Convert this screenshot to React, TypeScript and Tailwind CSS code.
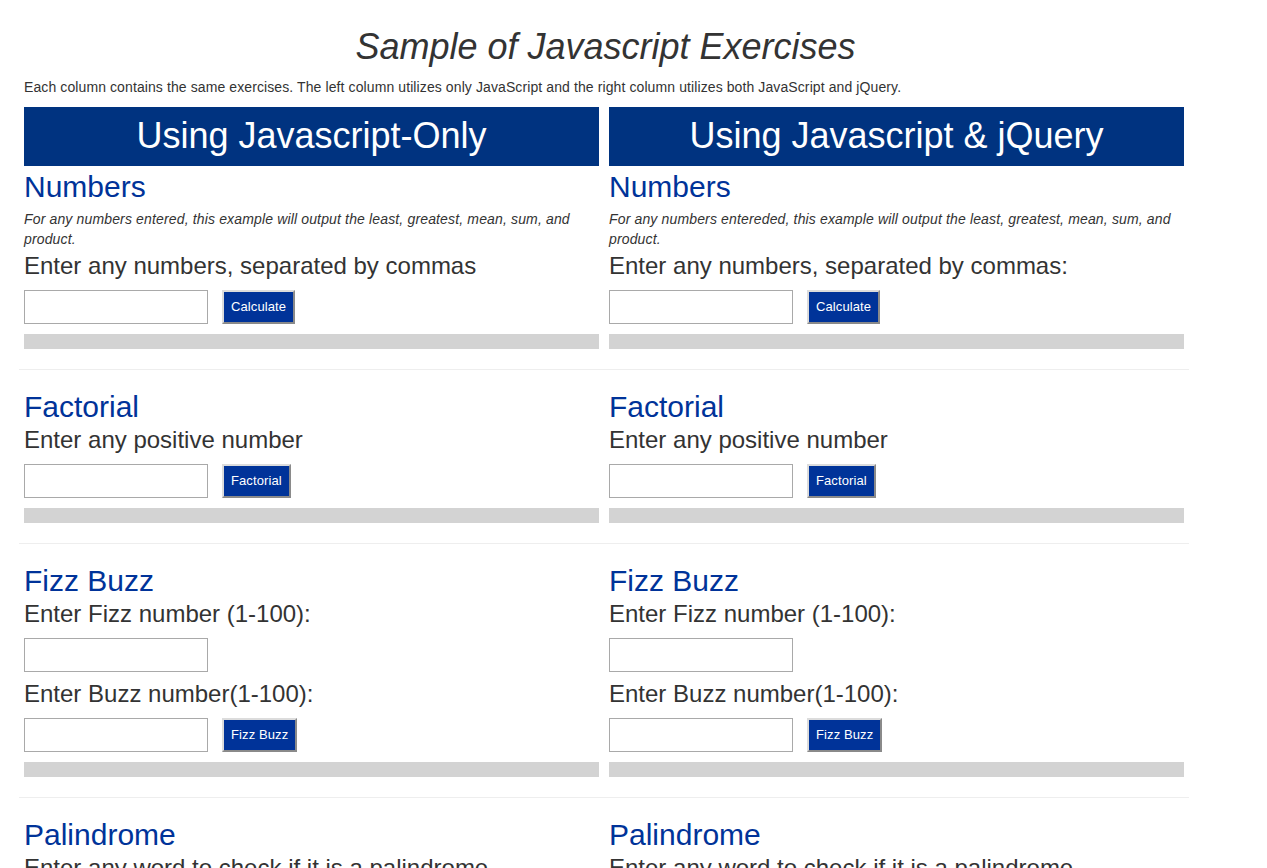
import { ReactNode } from "react";

type Field = { label: string };

type Exercise = {
  title: string;
  note?: string;
  fields: Field[];
  button: string;
};

const leftExercises: Exercise[] = [
  {
    title: "Numbers",
    note: "For any numbers entered, this example will output the least, greatest, mean, sum, and product.",
    fields: [{ label: "Enter any numbers, separated by commas" }],
    button: "Calculate",
  },
  { title: "Factorial", fields: [{ label: "Enter any positive number" }], button: "Factorial" },
  {
    title: "Fizz Buzz",
    fields: [{ label: "Enter Fizz number (1-100):" }, { label: "Enter Buzz number(1-100):" }],
    button: "Fizz Buzz",
  },
  { title: "Palindrome", fields: [{ label: "Enter any word to check if it is a palindrome" }], button: "Check" },
];

const rightExercises: Exercise[] = [
  {
    title: "Numbers",
    note: "For any numbers entereded, this example will output the least, greatest, mean, sum, and product.",
    fields: [{ label: "Enter any numbers, separated by commas:" }],
    button: "Calculate",
  },
  { title: "Factorial", fields: [{ label: "Enter any positive number" }], button: "Factorial" },
  {
    title: "Fizz Buzz",
    fields: [{ label: "Enter Fizz number (1-100):" }, { label: "Enter Buzz number(1-100):" }],
    button: "Fizz Buzz",
  },
  { title: "Palindrome", fields: [{ label: "Enter any word to check if it is a palindrome" }], button: "Check" },
];

const Col = ({ children }: { children: ReactNode }) => <div className="px-[5px]">{children}</div>;

const ExerciseBlock = ({ ex, first }: { ex: Exercise; first: boolean }) => (
  <div>
    <h2 className={`text-[30px] leading-[33px] text-[#003399] ${first ? "mt-[4px]" : ""}`}>{ex.title}</h2>
    {ex.note && (
      <p className="mt-[6px] text-[14px] italic leading-[20px] tracking-[0.15px] text-[#333]">{ex.note}</p>
    )}
    {ex.fields.map((f, i) => (
      <div key={f.label} className={i > 0 ? "mt-[5px]" : ""}>
        <p className="text-[24px] leading-[34px] text-[#333]">{f.label}</p>
        <div className="mt-[7px] flex items-center">
          <input type="text" className="h-[34px] w-[184px] border border-[#a9a9a9] bg-white px-1 outline-none" />
          {i === ex.fields.length - 1 && (
            <button className="ml-[14px] h-[34px] border-2 border-t-[#dcdcdc] border-l-[#dcdcdc] border-r-[#8a8a8a] border-b-[#8a8a8a] bg-[#003399] px-[7px] text-[13px] tracking-[0.1px] text-white">
              {ex.button}
            </button>
          )}
        </div>
      </div>
    ))}
    <div className="mt-[10px] h-[15px] bg-[#d3d3d3]" />
  </div>
);

export default function App() {
  return (
    <div className="min-h-screen bg-white font-['Liberation_Sans',Arial,sans-serif] text-[#333]">
      <div className="ml-[19px] w-[1170px]">
        <h1 className="pt-[27px] pl-[3px] text-center text-[36px] italic leading-[40px] text-[#333]">
          Sample of Javascript Exercises
        </h1>
        <p className="mt-[10px] px-[5px] text-[14px] leading-[20px] tracking-[0.1px]">
          Each column contains the same exercises. The left column utilizes only JavaScript and the right column utilizes both JavaScript and jQuery.
        </p>
        <div className="mt-[10px] grid grid-cols-2">
          <Col>
            <div className="bg-[#003380] pt-[9px] pb-[10px] text-center text-[36px] leading-[40px] text-white">
              Using Javascript-Only
            </div>
          </Col>
          <Col>
            <div className="bg-[#003380] pt-[9px] pb-[10px] text-center text-[36px] leading-[40px] text-white">
              Using Javascript &amp; jQuery
            </div>
          </Col>
        </div>
        {leftExercises.map((ex, idx) => (
          <div key={ex.title}>
            {idx > 0 && <hr className="my-[20px] border-0 border-t border-[#eeeeee]" />}
            <div className="grid grid-cols-2">
              <Col>
                <ExerciseBlock ex={ex} first={idx === 0} />
              </Col>
              <Col>
                <ExerciseBlock ex={rightExercises[idx]} first={idx === 0} />
              </Col>
            </div>
          </div>
        ))}
        <div className="h-[40px]" />
      </div>
    </div>
  );
}
